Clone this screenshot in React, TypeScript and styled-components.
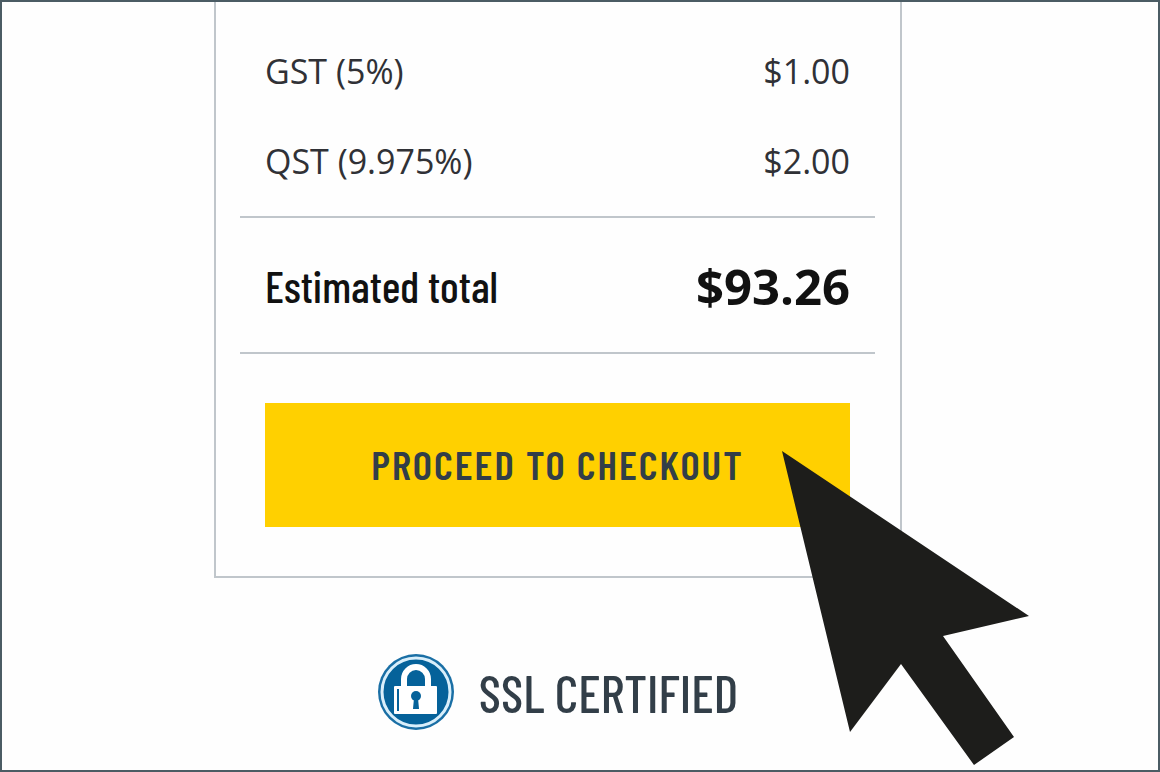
import React from "react";
import styled, { createGlobalStyle } from "styled-components";

const GlobalStyle = createGlobalStyle`
  *, *::before, *::after { box-sizing: border-box; }
  body { margin: 0; background: #fefefe; }
`;

const condensed = `"Barlow Condensed", "Liberation Sans Narrow", "Roboto Condensed", "Liberation Sans", sans-serif`;

const Page = styled.main`
  display: grid;
  grid-template-columns: 212fr 688fr 256fr;
  align-content: start;
  min-height: 100vh;
  overflow: hidden;
  border: 2px solid #4b5c64;
  background: #fefefe;
  font-family: "Open Sans", "Noto Sans", sans-serif;
`;

const Column = styled.div`
  grid-column: 2;
  display: flex;
  flex-direction: column;
  gap: 76px;
`;

const Card = styled.section`
  position: relative;
  padding: 24px 25px 49px 24px;
  border: 2px solid #c0c6cb;
  border-top: 0;
`;

const Summary = styled.dl`
  margin: 0;
`;

const Row = styled.div`
  display: flex;
  align-items: center;
  justify-content: space-between;
  height: 90px;
  padding: 0 25px;
  font-size: 34px;
  line-height: 48px;
  color: #303136;
`;

const TotalRow = styled(Row)`
  height: 138px;
  margin-top: 10px;
  padding-top: 2px;
  border: solid #c0c6cb;
  border-width: 2px 0;
  color: #111;
`;

const Term = styled.dt``;

const Amount = styled.dd`
  margin: 0;
`;

const TotalTerm = styled(Term)`
  font-family: ${condensed};
  font-size: 44px;
  font-weight: 500;
`;

const TotalAmount = styled(Amount)`
  font-size: 49px;
  font-weight: 700;
`;

const CheckoutButton = styled.button`
  display: block;
  width: calc(100% - 50px);
  height: 124px;
  margin: 49px auto 0;
  padding: 0 0 4px;
  border: 0;
  background: #ffd000;
  color: #323e48;
  font-family: ${condensed};
  font-size: 41px;
  font-weight: 600;
  letter-spacing: 2px;
  text-transform: uppercase;
  cursor: pointer;
`;

const Pointer = styled.svg`
  position: absolute;
  right: -130px;
  bottom: -190px;
  width: 248px;
  height: 315px;
  pointer-events: none;
`;

const Badge = styled.div`
  display: flex;
  align-items: center;
  justify-content: center;
  gap: 25px;
  font-family: ${condensed};
  font-size: 52px;
  font-weight: 500;
  line-height: 48px;
  color: #323e48;
`;

const Seal = styled.svg`
  flex: none;
  width: 76px;
  height: 76px;
`;

const taxes = [
  { label: "GST (5%)", amount: "$1.00" },
  { label: "QST (9.975%)", amount: "$2.00" },
];

export default function App() {
  return (
    <>
      <GlobalStyle />
      <Page>
        <Column>
          <Card>
            <Summary>
              {taxes.map((tax) => (
                <Row key={tax.label}>
                  <Term>{tax.label}</Term>
                  <Amount>{tax.amount}</Amount>
                </Row>
              ))}
              <TotalRow>
                <TotalTerm>Estimated total</TotalTerm>
                <TotalAmount>$93.26</TotalAmount>
              </TotalRow>
            </Summary>
            <CheckoutButton type="button">Proceed to checkout</CheckoutButton>
            <Pointer viewBox="0 0 248 315" aria-hidden="true">
              <path d="M0 0 L247 165 L161 185 L232 286 L192 314 L119 213 L68 281 Z" fill="#1d1d1b" />
            </Pointer>
          </Card>
          <Badge>
            <Seal viewBox="0 0 76 76" aria-hidden="true">
              <circle cx="38" cy="38" r="38" fill="#1a6fa5" />
              <circle cx="38" cy="38" r="34" fill="#05629a" stroke="#d9effb" strokeWidth="3" />
              <path d="M26 34V25a12 12 0 0 1 24 0v9" fill="none" stroke="#fff" strokeWidth="6" />
              <rect x="16" y="32" width="43" height="28" rx="1" fill="#fff" />
              <path d="M20 35v22" stroke="#05629a" strokeWidth="2" />
              <circle cx="38" cy="42" r="5" fill="#05629a" />
              <path d="M36 44h4l1 11h-6z" fill="#05629a" />
            </Seal>
            <span>SSL CERTIFIED</span>
          </Badge>
        </Column>
      </Page>
    </>
  );
}
